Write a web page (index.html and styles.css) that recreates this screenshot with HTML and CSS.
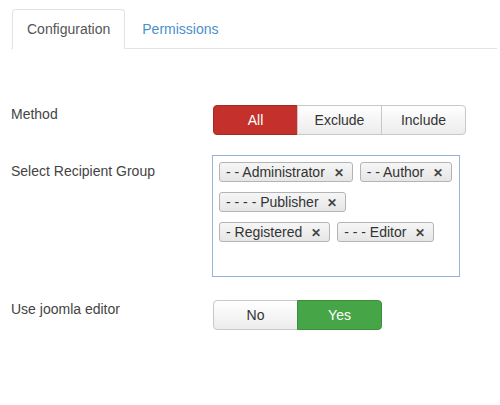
FILE: index.html
```html
<!DOCTYPE html>
<html>
<head>
<meta charset="utf-8">
<link rel="stylesheet" href="styles.css">
</head>
<body>
<div class="page">
  <ul class="tabs">
    <li class="tab active">Configuration</li>
    <li class="tab link">Permissions</li>
  </ul>
  <div class="form">
    <div class="row row-method">
      <div class="label">Method</div>
      <div class="btn-group">
        <span class="btn red">All</span>
        <span class="btn">Exclude</span>
        <span class="btn">Include</span>
      </div>
    </div>
    <div class="row row-group">
      <div class="label label-group">Select Recipient Group</div>
      <div class="chosen">
        <span class="chip">- - Administrator <b class="x">✕</b></span>
        <span class="chip">- - Author <b class="x">✕</b></span>
        <span class="chip">- - - - Publisher <b class="x">✕</b></span>
        <span class="chip">- Registered <b class="x">✕</b></span>
        <span class="chip">- - - Editor <b class="x">✕</b></span>
      </div>
    </div>
    <div class="row row-editor">
      <div class="label">Use joomla editor</div>
      <div class="btn-group">
        <span class="btn">No</span>
        <span class="btn green">Yes</span>
      </div>
    </div>
  </div>
</div>
</body>
</html>
```

FILE: styles.css
```css
html, body {
  margin: 0;
  padding: 0;
  background: #fff;
}
body {
  font-family: "Liberation Sans", Arial, sans-serif;
  font-size: 14px;
  color: #333;
}
.page {
  padding: 9px 3px 0 11px;
}
.tabs {
  list-style: none;
  margin: 0;
  padding: 0 0 0 1px;
  display: flex;
  border-bottom: 1px solid #e3e3e3;
}
.tab {
  padding: 9px 14px;
  line-height: 20px;
  margin-bottom: -1px;
  border: 1px solid transparent;
  border-radius: 4px 4px 0 0;
  margin-right: 2px;
}
.tab.active {
  border-color: #e3e3e3;
  border-bottom-color: #fff;
  background: #fff;
  color: #555;
}
.tab.link {
  color: #4a90cc;
}
.form {
  padding-top: 56px;
}
.row {
  display: flex;
  align-items: flex-start;
}
.row-group {
  margin-top: 20px;
}
.row-editor {
  margin-top: 23px;
}
.label {
  width: 202px;
  line-height: 20px;
  margin-top: -1px;
  color: #444;
}
.label-group {
  margin-top: 6px;
}
.btn-group {
  display: flex;
}
.btn {
  width: 85px;
  box-sizing: border-box;
  height: 30px;
  line-height: 28px;
  text-align: center;
  border: 1px solid #c8c8c8;
  background: linear-gradient(#ffffff, #ececec);
  color: #333;
  margin-left: -1px;
}
.btn:first-child {
  border-radius: 4px 0 0 4px;
  margin-left: 0;
}
.btn:last-child {
  border-radius: 0 4px 4px 0;
}
.btn.red {
  background: #c4302b;
  border-color: #a82a24;
  color: #fff;
}
.btn.green {
  background: #46a546;
  border-color: #3c8f3c;
  color: #fff;
}
.chosen {
  box-sizing: border-box;
  width: 248px;
  height: 122px;
  border: 1px solid #93b4d8;
  padding: 6px 0 0 6px;
  display: flex;
  flex-wrap: wrap;
  align-content: flex-start;
  column-gap: 7px;
  row-gap: 10px;
  margin-left: -1px;
}
.chip {
  box-sizing: border-box;
  height: 20px;
  line-height: 18px;
  border: 1px solid #b4b4b4;
  border-radius: 3px;
  background: linear-gradient(#f6f6f6, #e6e6e6);
  padding: 0 8px 0 6px;
  color: #333;
  white-space: nowrap;
}
.x {
  font-size: 12px;
  color: #444;
  margin-left: 5px;
}
```
